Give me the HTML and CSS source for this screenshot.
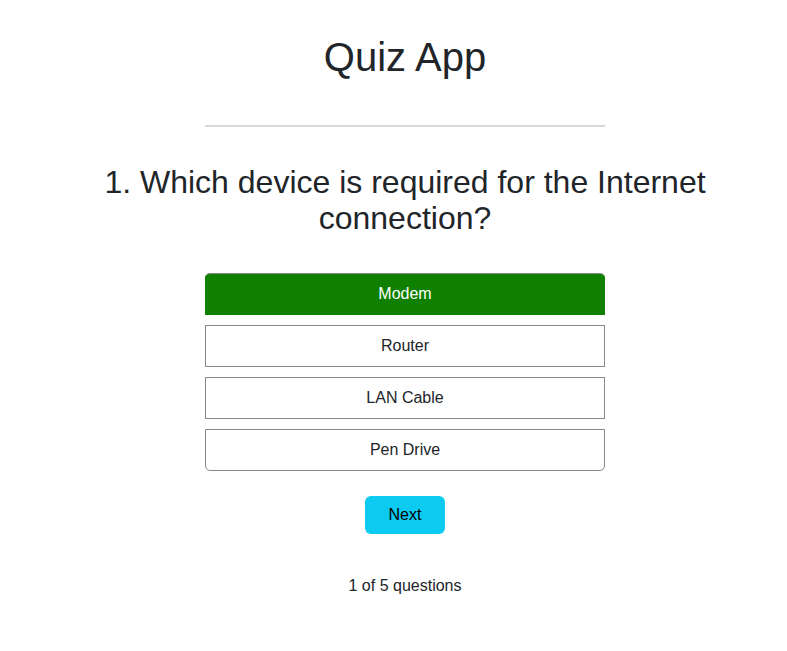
FILE: index.html
```html
<!DOCTYPE html>
<html lang="en">
<head>
<meta charset="utf-8">
<title>Quiz App</title>
<link rel="stylesheet" href="styles.css">
</head>
<body>
<main class="app">
  <h1 class="title">Quiz App</h1>
  <hr class="divider">
  <h2 class="question">1. Which device is required for the Internet connection?</h2>
  <ul class="options">
    <li class="option option-selected">Modem</li>
    <li class="option">Router</li>
    <li class="option">LAN Cable</li>
    <li class="option">Pen Drive</li>
  </ul>
  <button class="next-btn" type="button">Next</button>
  <p class="progress">1 of 5 questions</p>
</main>
</body>
</html>
```

FILE: styles.css
```css
html, body {
  margin: 0;
  padding: 0;
  background: #ffffff;
}

body {
  font-family: "Liberation Sans", Arial, sans-serif;
  color: #212529;
}

.app {
  display: flex;
  flex-direction: column;
  align-items: center;
  padding-left: 23px;
  text-align: center;
}

.title {
  margin: 35px 0 0;
  font-size: 40px;
  font-weight: 400;
  line-height: 45px;
}

.divider {
  margin: 45px 0 0;
  width: 400px;
  height: 2px;
  border: 0;
  background: #d9d9d9;
}

.question {
  margin: 37px 0 0;
  width: 640px;
  font-size: 32px;
  font-weight: 400;
  line-height: 36px;
}

.options {
  list-style: none;
  margin: 37px 0 0;
  padding: 0;
  width: 400px;
  display: flex;
  flex-direction: column;
  gap: 10px;
}

.option {
  box-sizing: border-box;
  height: 42px;
  display: flex;
  align-items: center;
  justify-content: center;
  border: 1px solid #888888;
  font-size: 16px;
  color: #212529;
  background: #ffffff;
}

.option:first-child {
  border-radius: 5px 5px 0 0;
}

.option:last-child {
  border-radius: 0 0 5px 5px;
}

.option-selected {
  background: #0f8000;
  border-color: #0f8000;
  border-top-color: #888888;
  color: #ffffff;
}

.next-btn {
  margin: 25px 0 0;
  width: 80px;
  height: 38px;
  border: 0;
  border-radius: 6px;
  background: #0dcaf0;
  color: #000000;
  font-family: "Liberation Sans", Arial, sans-serif;
  font-size: 16px;
}

.progress {
  margin: 43px 0 0;
  font-size: 16px;
  line-height: 18px;
}
```
